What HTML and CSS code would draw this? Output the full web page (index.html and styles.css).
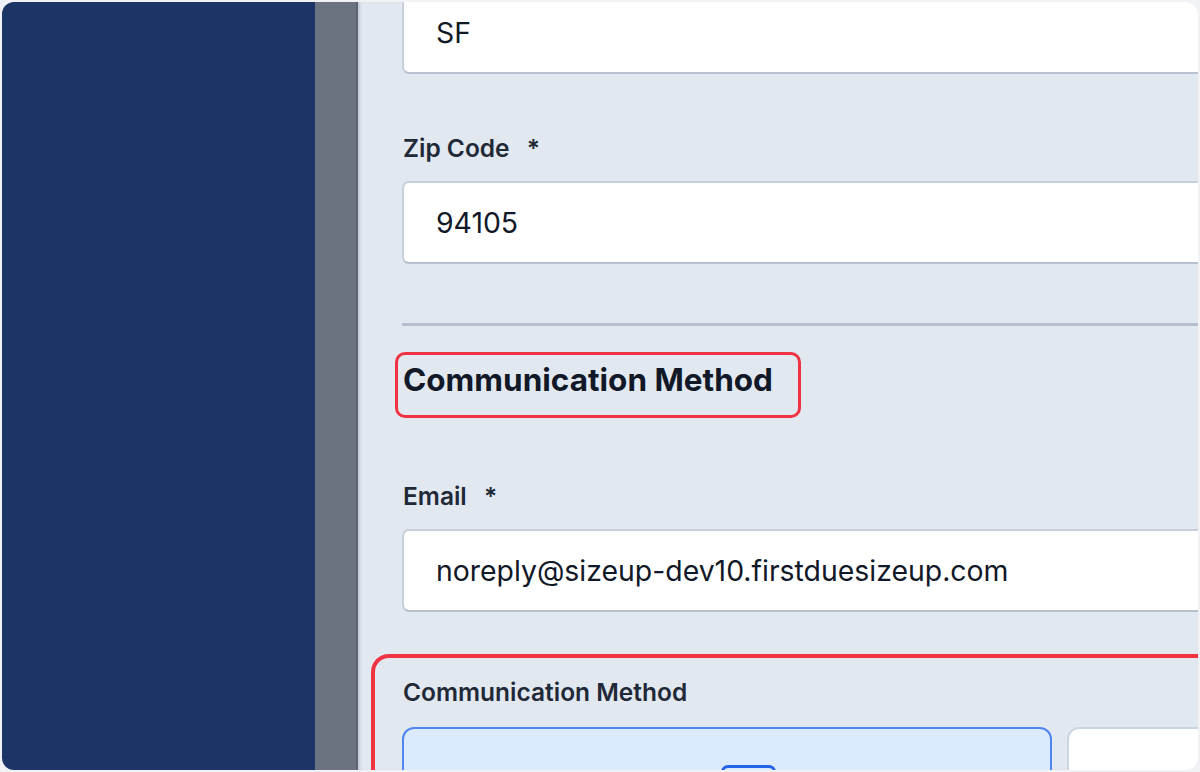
FILE: index.html
```html
<!DOCTYPE html>
<html>
<head>
<meta charset="utf-8">
<link rel="stylesheet" href="styles.css">
</head>
<body>
<div class="frame">
  <aside class="nav"></aside>
  <div class="strip"></div>
  <main class="main">
    <div class="form">
      <div class="input first">SF</div>
      <div class="field">
        <label class="label">Zip Code <span class="req">*</span></label>
        <div class="input">94105</div>
      </div>
      <hr class="divider">
      <div class="section-head"><h2 class="heading">Communication Method</h2></div>
      <div class="field email-field">
        <label class="label">Email <span class="req">*</span></label>
        <div class="input">noreply@sizeup-dev10.firstduesizeup.com</div>
      </div>
      <div class="highlight">
        <div class="label small">Communication Method</div>
        <div class="cards">
          <div class="card active"><div class="icon-box"></div></div>
          <div class="card"></div>
        </div>
      </div>
    </div>
  </main>
</div>
</body>
</html>
```

FILE: styles.css
```css
html, body {
  margin: 0;
  padding: 0;
  background: #f1f2f6;
  font-family: Inter, "Noto Sans", sans-serif;
}
.frame {
  margin: 2px;
  height: 768px;
  width: 1196px;
  border-radius: 12px;
  overflow: hidden;
  display: flex;
}
.nav {
  width: 313px;
  flex: none;
  background: #1d3566;
}
.strip {
  width: 41px;
  flex: none;
  background: #6b7280;
  border-right: 2px solid #5d6473;
}
.main {
  flex: 1;
  background: #e2e8f0;
  overflow: hidden;
  padding-left: 44px;
  box-shadow: inset 3px 0 3px -1px #c3cad6;
}
.form {
  width: 1000px;
  margin-top: -11px;
}
.input {
  background: #fff;
  border: 2px solid #c7cfdb;
  border-bottom-color: #b8c1d0;
  border-radius: 7px;
  box-sizing: border-box;
  height: 83px;
  padding-left: 32px;
  display: flex;
  align-items: center;
  font-size: 28.4px;
  color: #111827;
}
.field {
  margin-top: 60px;
}
.label {
  display: block;
  font-weight: 600;
  font-size: 24.5px;
  line-height: 28px;
  color: #1f2937;
  margin-bottom: 19px;
  padding-left: 1px;
}
.req {
  margin-left: 11px;
}
.divider {
  border: none;
  height: 3px;
  background: #b7bfd2;
  margin: 59px 0 0 0;
}
.section-head {
  margin-top: 26px;
  margin-left: -7px;
  width: 395px;
  height: 60px;
  border: 3px solid #ef3342;
  border-radius: 10px;
  display: flex;
  align-items: center;
  padding-left: 5px;
  box-sizing: content-box;
}
.heading {
  margin: 0;
  font-size: 31.5px;
  font-weight: 700;
  color: #111827;
  margin-top: -11px;
  white-space: nowrap;
}
.email-field {
  margin-top: 64px;
}
.highlight {
  margin-top: 42px;
  margin-left: -31px;
  border: 4px solid #ef3342;
  border-right: none;
  border-radius: 18px 0 0 0;
  padding: 20px 0 0 27px;
  height: 200px;
}
.label.small {
  margin-bottom: 21px;
  white-space: nowrap;
}
.cards {
  display: flex;
  gap: 15px;
}
.card {
  width: 650px;
  height: 120px;
  box-sizing: border-box;
  border: 2px solid #cbd5e1;
  border-radius: 12px;
  background: #fff;
  flex: none;
}
.card.active {
  background: #dbeafe;
  border-color: #4f86f0;
  display: flex;
  justify-content: center;
}
.icon-box {
  margin-top: 36px;
  width: 55px;
  height: 50px;
  box-sizing: border-box;
  border: 3px solid #2563eb;
  border-radius: 7px;
  margin-left: 43px;
}
```
